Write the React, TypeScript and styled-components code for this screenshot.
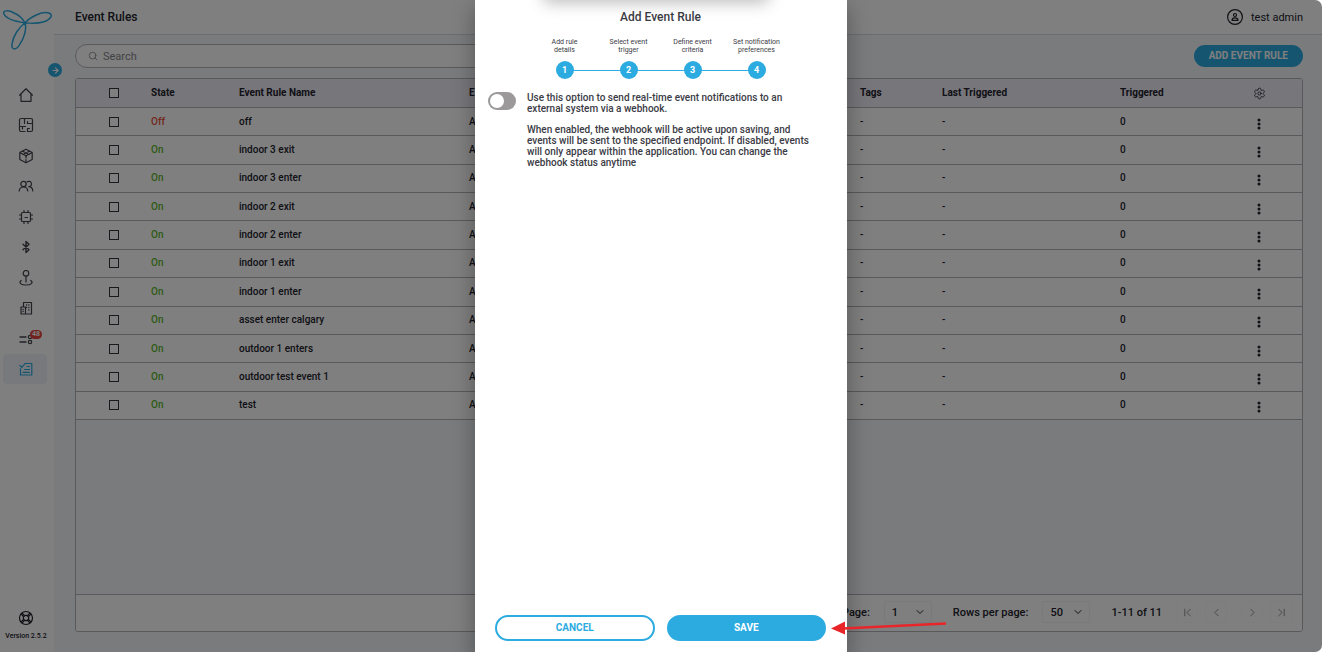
import React, { useState } from 'react';
import styled, { createGlobalStyle } from 'styled-components';
import { Settings, ArrowRight, Search, ChevronDown, ChevronLeft, ChevronRight, ChevronFirst, ChevronLast } from 'lucide-react';

const GlobalStyle = createGlobalStyle`
  * { box-sizing: border-box; }
  body { margin: 0; background: #fff; font-family: Roboto, "Open Sans", sans-serif; color: #22222c; }
  button, input, select { font: inherit; color: inherit; margin: 0; }
  button { cursor: pointer; }
`;

const blue = '#2cabe1';
const line = '#b2b3b9';

const Page = styled.div`
  position: relative;
  display: flex;
  min-height: 100vh;
  border-radius: 0 7px 7px 0;
  overflow: hidden;
  font-size: 10px;
  font-weight: 500;
`;

const Sidebar = styled.aside`
  position: relative;
  width: 54px;
  flex: none;
  display: flex;
  flex-direction: column;
  align-items: center;
  padding: 8px 0 11px;
  background: #fff;
`;

const Logo = styled.svg`
  width: 50px;
  height: 44px;
  flex: none;
`;

const ExpandButton = styled.button`
  position: absolute;
  top: 63px;
  right: -8px;
  width: 14px;
  height: 14px;
  padding: 0;
  border: 0;
  border-radius: 50%;
  background: ${blue};
  color: #fff;
  display: grid;
  place-items: center;
  z-index: 1;
`;

const Nav = styled.nav`
  width: 100%;
  height: 304px;
  margin-top: 28px;
  padding: 0 7px 0 3px;
  display: flex;
  flex-direction: column;
  justify-content: space-between;
`;

const NavLink = styled.a<{ $active?: boolean }>`
  position: relative;
  display: grid;
  place-items: center;
  height: 30px;
  padding-left: 2px;
  border-radius: 4px;
  color: ${(p) => (p.$active ? blue : '#42424c')};
  background: ${(p) => (p.$active ? '#eef3f8' : 'transparent')};
`;

const Glyph = styled.svg`
  width: 16px;
  height: 16px;
  fill: none;
  stroke: currentColor;
  stroke-width: 1.2;
  stroke-linecap: round;
  stroke-linejoin: round;
`;

const Badge = styled.span`
  position: absolute;
  top: 6px;
  right: 5px;
  height: 9px;
  padding: 0 2px;
  border-radius: 5px;
  background: #e5453c;
  color: #fff;
  font-size: 7px;
  line-height: 9px;
  font-weight: 700;
`;

const Help = styled.div`
  margin-top: auto;
  display: flex;
  flex-direction: column;
  align-items: center;
  gap: 5px;
  width: 48px;
  margin-right: 2px;
  font-size: 7px;
  line-height: 10px;
  white-space: nowrap;
`;

const Content = styled.div`
  flex: 1;
  min-width: 0;
  display: flex;
  flex-direction: column;
  background: #f3f6fa;
`;

const TopBar = styled.header`
  height: 35px;
  display: flex;
  align-items: center;
  justify-content: space-between;
  padding: 0 19px 0 21px;
  background: #fff;
  border-bottom: 1px solid #d5dade;
`;

const PageTitle = styled.h1`
  margin: 0;
  font-size: 12px;
  line-height: 16px;
  font-weight: 500;
`;

const User = styled.div`
  display: flex;
  align-items: center;
  gap: 8px;
  font-size: 11px;
  font-weight: 400;
`;

const Main = styled.main`
  flex: 1;
  display: flex;
  flex-direction: column;
  gap: 10px;
  padding: 9px 19px 20px 21px;
`;

const Tools = styled.div`
  display: flex;
  justify-content: space-between;
  align-items: center;
`;

const SearchBox = styled.label`
  display: flex;
  align-items: center;
  gap: 5px;
  width: 40%;
  height: 24px;
  padding: 0 12px;
  border: 1px solid ${line};
  border-radius: 12px;
  background: #fff;
  color: #84858b;
  font-size: 11px;
  font-weight: 400;

  input {
    flex: 1;
    min-width: 0;
    padding: 0;
    border: 0;
    outline: 0;
    background: transparent;
  }
  input::placeholder { color: #84858b; opacity: 1; }
`;

const PillButton = styled.button<{ $outline?: boolean }>`
  height: 26px;
  padding: 0 15px;
  border: 2px solid ${blue};
  border-radius: 13px;
  background: ${(p) => (p.$outline ? '#fff' : blue)};
  color: ${(p) => (p.$outline ? blue : '#fff')};
  font-size: 10px;
  font-weight: 700;
  line-height: 14px;
  white-space: nowrap;
`;

const AddButton = styled(PillButton)`
  height: 22px;
  padding: 0 13px;
`;

const Panel = styled.section`
  flex: 1;
  display: flex;
  flex-direction: column;
  justify-content: space-between;
  border: 1px solid ${line};
  border-radius: 3px;
  overflow: hidden;
`;

const Table = styled.table`
  width: 100%;
  height: 341px;
  table-layout: fixed;
  border-collapse: separate;
  border-spacing: 0;
  background: #fff;

  th, td {
    padding: 0;
    text-align: left;
    line-height: 14px;
    border-bottom: 1px solid ${line};
    white-space: nowrap;
  }
  th { height: 29px; background: #efecf7; font-weight: 700; }
  th:first-child, td:first-child, th:last-child, td:last-child { text-align: center; }
`;

const Col = styled.col<{ $w?: number }>`
  width: ${(p) => (p.$w ? `${p.$w}px` : 'auto')};
`;

const Check = styled.input`
  appearance: none;
  display: block;
  width: 10px;
  height: 10px;
  margin: 0 auto;
  border: 1px solid #33333d;
  background: #fff;
`;

const State = styled.span<{ $on: boolean }>`
  color: ${(p) => (p.$on ? '#5cb52c' : '#e5533c')};
`;

const IconButton = styled.button`
  display: block;
  margin: 0 auto;
  padding: 0;
  border: 0;
  background: transparent;
  svg { display: block; }
`;

const Dots = styled(IconButton)`
  padding-top: 4px;
`;

const Pager = styled.footer`
  display: flex;
  align-items: center;
  justify-content: flex-end;
  height: 37px;
  padding: 0 10px 2px 0;
  border-top: 1px solid ${line};
  background: #fff;
  font-size: 11px;
`;

const PageField = styled.label`
  display: flex;
  align-items: center;
  gap: 14px;
  margin-right: 21px;
`;

const SelectWrap = styled.span`
  position: relative;
  display: block;
  width: 48px;

  select {
    appearance: none;
    width: 100%;
    height: 22px;
    padding: 0 0 0 7px;
    border: 1px solid #f2f2f4;
    border-radius: 2px;
    background: #fff;
  }
  svg {
    position: absolute;
    right: 6px;
    top: 5px;
    pointer-events: none;
  }
`;

const PageButtons = styled.div`
  display: grid;
  grid-template-columns: 22px 29px 22px 22px;
  column-gap: 7px;
  margin-left: 14px;
  color: #77787f;

  button {
    display: grid;
    place-items: center;
    width: 22px;
    height: 22px;
    padding: 0;
    border: 1px solid #fafafb;
    border-radius: 2px;
    background: transparent;
  }
`;

const Backdrop = styled.div`
  position: absolute;
  inset: 0;
  z-index: 2;
  display: flex;
  justify-content: center;
  background: rgba(0, 0, 0, 0.5);
`;

const Dialog = styled.div`
  position: relative;
  display: flex;
  flex-direction: column;
  width: 28%;
  min-width: 372px;
  padding: 8px 21px 11px 20px;
  background: #fff;
  color: #3b3b45;
  box-shadow: 0 9px 20px 2px rgba(0, 0, 0, 0.28);

  &::before {
    content: '';
    position: absolute;
    left: 70px;
    right: 80px;
    top: -22px;
    height: 18px;
    border-radius: 4px;
    box-shadow: 0 5px 16px 2px rgba(0, 0, 0, 0.26);
  }
`;

const DialogTitle = styled.h2`
  margin: 0;
  text-align: center;
  font-size: 12px;
  line-height: 18px;
  font-weight: 500;
`;

const Steps = styled.ol`
  display: flex;
  justify-content: center;
  margin: 12px 0 0;
  padding: 0;
  list-style: none;
`;

const Step = styled.li`
  position: relative;
  display: flex;
  flex-direction: column;
  align-items: center;
  gap: 7px;
  width: 64px;
  font-size: 7px;
  line-height: 8px;
  font-weight: 400;
  text-align: center;

  & + &::before {
    content: '';
    position: absolute;
    right: 50%;
    bottom: 8px;
    width: 100%;
    height: 1px;
    background: ${blue};
  }
`;

const StepLabel = styled.span`
  max-width: 52px;
  white-space: pre-line;
`;

const StepNumber = styled.span`
  z-index: 1;
  width: 18px;
  height: 18px;
  border-radius: 50%;
  background: ${blue};
  color: #fff;
  font-size: 9px;
  font-weight: 700;
  line-height: 18px;
`;

const Option = styled.label`
  display: flex;
  align-items: flex-start;
  gap: 11px;
  margin: 13px 0 0 -7px;
`;

const Toggle = styled.input`
  appearance: none;
  flex: none;
  width: 28px;
  height: 18px;
  padding: 2px;
  border-radius: 9px;
  background: #9b999a;

  &::before {
    content: '';
    display: block;
    width: 14px;
    height: 14px;
    border-radius: 50%;
    background: #fff;
  }
  &:checked { background: ${blue}; }
  &:checked::before { margin-left: 10px; }
`;

const Copy = styled.span`
  display: flex;
  flex-direction: column;
  gap: 10px;
  width: 284px;
  line-height: 11px;
`;

const Actions = styled.div`
  display: grid;
  grid-template-columns: 1fr 1fr;
  gap: 12px;
  margin-top: auto;
`;

const SaveSlot = styled.div`
  position: relative;
  display: grid;
`;

const Pointer = styled.svg`
  position: absolute;
  left: 100%;
  top: 4px;
  width: 122px;
  height: 18px;
`;

const navItems: { name: string; icon: React.ReactNode; badge?: string; active?: boolean }[] = [
  { name: 'Home', icon: <path d="M1.5 8.2 8 1.8l6.5 6.4M3 7v7.3h10V7" /> },
  {
    name: 'Floor plans',
    icon: <path d="M3 1.5h10A1.5 1.5 0 0 1 14.5 3v10a1.5 1.5 0 0 1-1.5 1.5H9.500v-3M7 14.500H3A1.500 1.500 0 0 1 1.500 13V3A1.500 1.500 0 0 1 3 1.500M6.500 1.500v5M1.500 9.500h3M9.500 6.500h5M9.500 6.500v-2M4.500 12v-2.500h3M9.500 11.500h2" />,
  },
  {
    name: 'Assets',
    icon: (
      <>
        <path d="M8 1.200 14.200 4.500v7L8 14.800 1.800 11.500v-7zM1.800 4.500 8 7.800l6.200-3.300" />
        <path d="M8 8v6.500M4.500 3.200l6.500 3.200M11.500 3.200 5 6.400" strokeDasharray="2 1.500" />
      </>
    ),
  },
  {
    name: 'People',
    icon: (
      <>
        <circle cx="5.500" cy="6" r="2.700" />
        <path d="M1.200 13c.2-2.600 1.800-4 4.300-4s4.100 1.400 4.300 4M9.200 3.800a2.700 2.700 0 1 1 1.600 4.900c2.400 0 3.800 1.600 4 4.300" />
      </>
    ),
  },
  {
    name: 'Devices',
    icon: (
      <>
        <rect x="3.500" y="3.500" width="9" height="9" rx="1" />
        <path d="M6 3.500v-2M10 3.500v-2M6 14.500v-2M10 14.500v-2M3.500 6h-2M3.500 10h-2M14.500 6h-2M14.500 10h-2M7 8.500h2.500" />
      </>
    ),
  },
  { name: 'Bluetooth', icon: <path strokeWidth="1.400" d="m5 5.200 6 5.600-3 2.700v-11l3 2.700-6 5.600" /> },
  {
    name: 'Locations',
    icon: (
      <>
        <circle cx="8" cy="3.300" r="2.800" />
        <path d="M8 6.100v6M3.200 10.500C.2 12.800 3 15 8 15s7.800-2.200 4.800-4.500" />
      </>
    ),
  },
  {
    name: 'Buildings',
    icon: (
      <>
        <path d="M5.500 7V2.500h8v11.500H3V7h4.500v7" />
        <path d="M8.500 5h.2M10.800 5h.2M8.500 7.500h.2M10.800 7.500h.2M10.800 10h.2M5 9.500h.2M5 11.500h.2" strokeWidth="1.300" />
      </>
    ),
  },
  {
    name: 'Alerts',
    badge: '48',
    icon: (
      <>
        <path d="M2 6h6M2 11h6" strokeWidth="1.300" />
        <circle cx="12" cy="6" r="1.700" />
        <circle cx="12" cy="11" r="1.700" />
      </>
    ),
  },
  {
    name: 'Event rules',
    active: true,
    icon: <path d="M2.500 7.500v6.500h11.300V2.500H8M2 4.500l1.800 1.800 3.500-4M9 5.500h2.500M6.500 8.500h5M5 11.300h6.500" />,
  },
];

const rules = [
  ['Off', 'off'],
  ['On', 'indoor 3 exit'],
  ['On', 'indoor 3 enter'],
  ['On', 'indoor 2 exit'],
  ['On', 'indoor 2 enter'],
  ['On', 'indoor 1 exit'],
  ['On', 'indoor 1 enter'],
  ['On', 'asset enter calgary'],
  ['On', 'outdoor 1 enters'],
  ['On', 'outdoor test event 1'],
  ['On', 'test'],
];

const steps = ['Add rule\ndetails', 'Select event\ntrigger', 'Define event\ncriteria', 'Set notification\npreferences'];

export default function App() {
  const [webhook, setWebhook] = useState(false);

  return (
    <>
      <GlobalStyle />
      <Page>
        <Sidebar>
          <Logo viewBox="0 0 50 44" fill="none" stroke={blue} strokeWidth="1.500">
            <path d="M23 15C17 14 4 11 2 6 0 2 7 2 12 5c5 2 9 6 11 10zM23 15c5-6 17-12 24-10 5 2 1 7-6 9-6 2-12 1-18 1zM23 15c2 6-1 15-5 21-4 7-9 6-8 0 1-8 7-17 13-21z" />
          </Logo>
          <ExpandButton aria-label="Expand menu"><ArrowRight size={9} strokeWidth={3} /></ExpandButton>
          <Nav>
            {navItems.map((item) => (
              <NavLink key={item.name} href="#" aria-label={item.name} $active={item.active}>
                <Glyph viewBox="0 0 16 16">{item.icon}</Glyph>
                {item.badge && <Badge>{item.badge}</Badge>}
              </NavLink>
            ))}
          </Nav>
          <Help>
            <Glyph viewBox="0 0 16 16">
              <circle cx="8" cy="8" r="6.500" />
              <circle cx="8" cy="8" r="2.700" />
              <path d="m3.100 4.100 2.500 2.500M4.100 3.100l2.500 2.500M12.900 4.100l-2.500 2.500M11.900 3.100 9.400 5.600M3.100 11.900l2.500-2.500M4.100 12.900l2.500-2.500M12.900 11.900l-2.500-2.500M11.900 12.900l-2.500-2.500" />
            </Glyph>
            Version 2.5.2
          </Help>
        </Sidebar>

        <Content>
          <TopBar>
            <PageTitle>Event Rules</PageTitle>
            <User>
              <Glyph viewBox="0 0 16 16">
                <circle cx="8" cy="8" r="7.400" />
                <circle cx="8" cy="6" r="1.500" />
                <path d="M5 11.300c0-2 1-2.500 3-2.500s3 .5 3 2.500z" />
              </Glyph>
              test admin
            </User>
          </TopBar>
          <Main>
            <Tools>
              <SearchBox>
                <Search size={10} />
                <input type="search" placeholder="Search" aria-label="Search" />
              </SearchBox>
              <AddButton>ADD EVENT RULE</AddButton>
            </Tools>
            <Panel>
              <Table>
                <colgroup>
                  <Col $w={75} />
                  <Col $w={88} />
                  <Col $w={230} />
                  <Col />
                  <Col $w={82} />
                  <Col $w={178} />
                  <Col $w={96} />
                  <Col $w={86} />
                </colgroup>
                <thead>
                  <tr>
                    <th><Check type="checkbox" aria-label="Select all" /></th>
                    <th>State</th>
                    <th>Event Rule Name</th>
                    <th>E</th>
                    <th>Tags</th>
                    <th>Last Triggered</th>
                    <th>Triggered</th>
                    <th><IconButton aria-label="Table settings"><Settings size={13} strokeWidth={1.5} /></IconButton></th>
                  </tr>
                </thead>
                <tbody>
                  {rules.map(([state, name]) => (
                    <tr key={name}>
                      <td><Check type="checkbox" aria-label={`Select ${name}`} /></td>
                      <td><State $on={state === 'On'}>{state}</State></td>
                      <td>{name}</td>
                      <td>A</td>
                      <td>-</td>
                      <td>-</td>
                      <td>0</td>
                      <td>
                        <Dots aria-label={`Actions for ${name}`}>
                          <svg width="4" height="12" viewBox="0 0 4 12" fill="#22222c">
                            <circle cx="2" cy="2" r="1.500" />
                            <circle cx="2" cy="6" r="1.500" />
                            <circle cx="2" cy="10" r="1.500" />
                          </svg>
                        </Dots>
                      </td>
                    </tr>
                  ))}
                </tbody>
              </Table>
              <Pager>
                <PageField>
                  Page:
                  <SelectWrap>
                    <select><option>1</option></select>
                    <ChevronDown size={12} />
                  </SelectWrap>
                </PageField>
                <PageField>
                  Rows per page:
                  <SelectWrap>
                    <select><option>50</option></select>
                    <ChevronDown size={12} />
                  </SelectWrap>
                </PageField>
                <span>1-11 of 11</span>
                <PageButtons>
                  <button aria-label="First page"><ChevronFirst size={13} strokeWidth={1.5} /></button>
                  <button aria-label="Previous page"><ChevronLeft size={13} strokeWidth={1.5} /></button>
                  <button aria-label="Next page"><ChevronRight size={13} strokeWidth={1.5} /></button>
                  <button aria-label="Last page"><ChevronLast size={13} strokeWidth={1.5} /></button>
                </PageButtons>
              </Pager>
            </Panel>
          </Main>
        </Content>

        <Backdrop>
          <Dialog role="dialog" aria-modal="true" aria-labelledby="dialog-title">
            <DialogTitle id="dialog-title">Add Event Rule</DialogTitle>
            <Steps>
              {steps.map((label, i) => (
                <Step key={label}>
                  <StepLabel>{label}</StepLabel>
                  <StepNumber>{i + 1}</StepNumber>
                </Step>
              ))}
            </Steps>
            <Option>
              <Toggle type="checkbox" role="switch" checked={webhook} onChange={(e) => setWebhook(e.target.checked)} />
              <Copy>
                <span>Use this option to send real-time event notifications to an external system via a webhook.</span>
                <span>
                  When enabled, the webhook will be active upon saving, and events will be sent to the specified endpoint. If
                  disabled, events will only appear within the application. You can change the webhook status anytime
                </span>
              </Copy>
            </Option>
            <Actions>
              <PillButton $outline>CANCEL</PillButton>
              <SaveSlot>
                <PillButton>SAVE</PillButton>
                <Pointer viewBox="0 0 122 18">
                  <path d="M17 9.500 120 4.500" stroke="#e8262a" strokeWidth="2.500" />
                  <path d="M5 9.500 19 2.500v13z" fill="#e8262a" />
                </Pointer>
              </SaveSlot>
            </Actions>
          </Dialog>
        </Backdrop>
      </Page>
    </>
  );
}
